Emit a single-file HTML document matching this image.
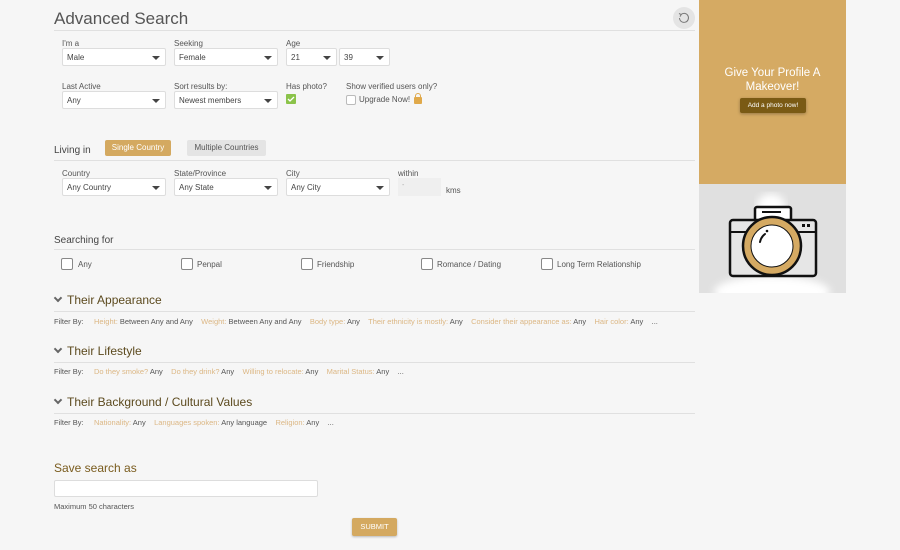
<!DOCTYPE html>
<html><head><meta charset="utf-8"><style>
*{box-sizing:border-box;margin:0;padding:0}
body{width:900px;height:550px;background:#f6f6f6;font-family:"Liberation Sans",sans-serif;color:#444;position:relative;overflow:hidden}
.a{position:absolute;white-space:nowrap}
.lbl{font-size:8px;color:#555}
.sel{position:absolute;height:18px;background:#fff;border:1px solid #ddd;border-radius:2px;font-size:8px;color:#444;padding:4px 0 0 4px}
.sel:after{content:"";position:absolute;right:5px;top:7px;border-left:4px solid transparent;border-right:4px solid transparent;border-top:4px solid #444}
.line{position:absolute;height:1px;background:#e0e0e0}
.cb{position:absolute;width:12px;height:12px;border:1px solid #888;border-radius:2px;background:#fff}
.h2{font-size:12px;color:#5c4a1e}
.fb{font-size:7.5px;color:#555}
.fb span{color:#dcb784}
.chev{display:inline-block;width:6px;height:6px;border-right:2px solid #666;border-bottom:2px solid #666;transform:rotate(45deg);margin:0 6px 3px 1px}
</style></head><body>
<div class="a" style="left:54px;top:9px;font-size:17px;color:#555">Advanced Search</div>
<div class="line" style="left:54px;top:30px;width:641px"></div>
<div class="a" style="left:673px;top:7px;width:22px;height:22px;border-radius:50%;background:#e4e4e4"></div>
<svg class="a" style="left:678px;top:12px" width="12" height="12" viewBox="0 0 12 12"><path d="M3 2.5A4.5 4.5 0 1 1 1.5 6" fill="none" stroke="#777" stroke-width="1"/><path d="M1 1.5L3.2 2.6 2 4.6" fill="none" stroke="#777" stroke-width="1"/></svg>

<div class="a lbl" style="left:62px;top:39px">I'm a</div>
<div class="sel" style="left:62px;top:48px;width:104px">Male</div>
<div class="a lbl" style="left:174px;top:39px">Seeking</div>
<div class="sel" style="left:174px;top:48px;width:104px">Female</div>
<div class="a lbl" style="left:286px;top:39px">Age</div>
<div class="sel" style="left:286px;top:48px;width:51px">21</div>
<div class="sel" style="left:339px;top:48px;width:51px">39</div>

<div class="a lbl" style="left:62px;top:82px">Last Active</div>
<div class="sel" style="left:62px;top:91px;width:104px">Any</div>
<div class="a lbl" style="left:174px;top:82px">Sort results by:</div>
<div class="sel" style="left:174px;top:91px;width:104px">Newest members</div>
<div class="a lbl" style="left:286px;top:82px">Has photo?</div>
<div class="a" style="left:286px;top:94px;width:10px;height:10px;background:#8bc34a;border-radius:1px"></div>
<svg class="a" style="left:287px;top:95px" width="8" height="8"><path d="M1 4l2 2 4-4" fill="none" stroke="#fff" stroke-width="1.3"/></svg>
<div class="a lbl" style="left:346px;top:82px">Show verified users only?</div>
<div class="cb" style="left:346px;top:95px;width:10px;height:10px;border-color:#bbb"></div>
<div class="a lbl" style="left:359px;top:95px">Upgrade Now!</div>
<div class="a" style="left:414px;top:97px;width:8px;height:7px;background:#e0a94a;border-radius:1px"></div>
<div class="a" style="left:415px;top:93px;width:6px;height:6px;border:1.5px solid #e0a94a;border-radius:3px 3px 0 0"></div>

<div class="a" style="left:54px;top:145px;font-size:10px;color:#444">Living in</div>
<div class="a" style="left:105px;top:140px;width:66px;height:16px;background:#d4a960;border-radius:2px;color:#fff;font-size:8px;text-align:center;line-height:16px">Single Country</div>
<div class="a" style="left:187px;top:140px;width:79px;height:16px;background:#e4e4e4;border-radius:2px;color:#555;font-size:8px;text-align:center;line-height:16px">Multiple Countries</div>
<div class="line" style="left:54px;top:160px;width:641px"></div>

<div class="a lbl" style="left:62px;top:169px">Country</div>
<div class="sel" style="left:62px;top:178px;width:104px">Any Country</div>
<div class="a lbl" style="left:174px;top:169px">State/Province</div>
<div class="sel" style="left:174px;top:178px;width:104px">Any State</div>
<div class="a lbl" style="left:286px;top:169px">City</div>
<div class="sel" style="left:286px;top:178px;width:104px">Any City</div>
<div class="a lbl" style="left:398px;top:169px">within</div>
<div class="a" style="left:398px;top:178px;width:43px;height:18px;background:#efefef;font-size:7px;color:#aaa;padding:4px 4px">-</div>
<div class="a lbl" style="left:446px;top:186px">kms</div>

<div class="a" style="left:54px;top:235px;font-size:10px;color:#444">Searching for</div>
<div class="line" style="left:54px;top:249px;width:641px"></div>
<div class="cb" style="left:61px;top:258px"></div><div class="a lbl" style="left:78px;top:260px">Any</div>
<div class="cb" style="left:181px;top:258px"></div><div class="a lbl" style="left:197px;top:260px">Penpal</div>
<div class="cb" style="left:301px;top:258px"></div><div class="a lbl" style="left:317px;top:260px">Friendship</div>
<div class="cb" style="left:421px;top:258px"></div><div class="a lbl" style="left:437px;top:260px">Romance / Dating</div>
<div class="cb" style="left:541px;top:258px"></div><div class="a lbl" style="left:557px;top:260px">Long Term Relationship</div>

<div class="a h2" style="left:54px;top:293px"><i class="chev"></i>Their Appearance</div>
<div class="line" style="left:54px;top:311px;width:641px"></div>
<div class="a fb" style="left:54px;top:317px">Filter By:&nbsp;&nbsp;&nbsp;&nbsp; <span>Height:</span> Between Any and Any&nbsp;&nbsp;&nbsp; <span>Weight:</span> Between Any and Any&nbsp;&nbsp;&nbsp; <span>Body type:</span> Any&nbsp;&nbsp;&nbsp; <span>Their ethnicity is mostly:</span> Any&nbsp;&nbsp;&nbsp; <span>Consider their appearance as:</span> Any&nbsp;&nbsp;&nbsp; <span>Hair color:</span> Any&nbsp;&nbsp;&nbsp; ...</div>

<div class="a h2" style="left:54px;top:344px"><i class="chev"></i>Their Lifestyle</div>
<div class="line" style="left:54px;top:362px;width:641px"></div>
<div class="a fb" style="left:54px;top:367px">Filter By:&nbsp;&nbsp;&nbsp;&nbsp; <span>Do they smoke?</span> Any&nbsp;&nbsp;&nbsp; <span>Do they drink?</span> Any&nbsp;&nbsp;&nbsp; <span>Willing to relocate:</span> Any&nbsp;&nbsp;&nbsp; <span>Marital Status:</span> Any&nbsp;&nbsp;&nbsp; ...</div>

<div class="a h2" style="left:54px;top:395px"><i class="chev"></i>Their Background / Cultural Values</div>
<div class="line" style="left:54px;top:413px;width:641px"></div>
<div class="a fb" style="left:54px;top:418px">Filter By:&nbsp;&nbsp;&nbsp;&nbsp; <span>Nationality:</span> Any&nbsp;&nbsp;&nbsp; <span>Languages spoken:</span> Any language&nbsp;&nbsp;&nbsp; <span>Religion:</span> Any&nbsp;&nbsp;&nbsp; ...</div>

<div class="a" style="left:54px;top:461px;font-size:12px;color:#7a5c1e">Save search as</div>
<div class="a" style="left:54px;top:480px;width:264px;height:17px;background:#fff;border:1px solid #ddd;border-radius:2px"></div>
<div class="a" style="left:54px;top:502px;font-size:7.5px;color:#555">Maximum 50 characters</div>
<div class="a" style="left:352px;top:518px;width:45px;height:18px;background:#d4a960;border-radius:2px;color:#fff;font-size:7.5px;text-align:center;line-height:18px;box-shadow:0 1px 2px rgba(0,0,0,.25)">SUBMIT</div>

<div class="a" style="left:699px;top:0;width:147px;height:184px;background:#d5aa63"></div>
<div class="a" style="left:699px;top:66px;width:147px;text-align:center;color:#fff;font-size:11.5px;line-height:14px;white-space:normal">Give Your Profile A<br>Makeover!</div>
<div class="a" style="left:740px;top:98px;width:66px;height:15px;background:#7a5a14;border-radius:2px;color:#fff;font-size:6.5px;text-align:center;line-height:15px;box-shadow:0 1px 3px rgba(0,0,0,.3)">Add a photo now!</div>
<div class="a" style="left:699px;top:184px;width:147px;height:109px;background:#e0e0e0;overflow:hidden">
<svg width="147" height="109" viewBox="0 0 147 109">
<defs><filter id="b"><feGaussianBlur stdDeviation="4"/></filter></defs>
<ellipse cx="72" cy="22" rx="14" ry="12" fill="#fff" filter="url(#b)"/>
<ellipse cx="73" cy="108" rx="58" ry="16" fill="#fff" filter="url(#b)"/>
<path d="M56 35V25a2 2 0 0 1 2-2h32a2 2 0 0 1 2 2v10" fill="#fff" stroke="#111" stroke-width="2.5"/>
<rect x="31" y="36" width="86" height="56" rx="3" fill="#e6e6e6" stroke="#111" stroke-width="2.5"/>
<line x1="31" y1="48" x2="117" y2="48" stroke="#111" stroke-width="2"/>
<line x1="63" y1="28" x2="82" y2="28" stroke="#111" stroke-width="2"/>
<rect x="103" y="40" width="3" height="3" fill="#111"/><rect x="108" y="40" width="3" height="3" fill="#111"/>
<circle cx="73" cy="62" r="29" fill="#d5aa63" stroke="#111" stroke-width="2.5"/>
<circle cx="73" cy="62" r="21" fill="#fff" stroke="#111" stroke-width="1"/>
<path d="M61 58a13 13 0 0 1 5-8" fill="none" stroke="#111" stroke-width="2" stroke-linecap="round"/>
<circle cx="68" cy="47" r="1.3" fill="#111"/>
</svg></div>
</body></html>
